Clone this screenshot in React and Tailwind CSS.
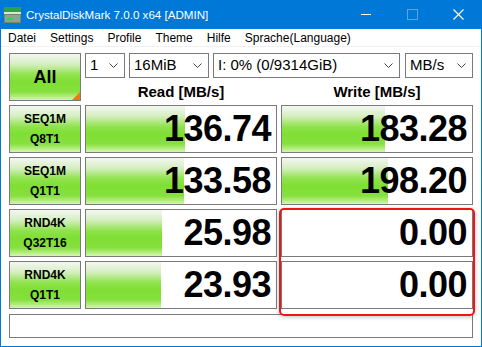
const rows = [
  { t1: 'SEQ1M', t2: 'Q8T1', read: '136.74', rw: 99, write: '183.28', ww: 103 },
  { t1: 'SEQ1M', t2: 'Q1T1', read: '133.58', rw: 98, write: '198.20', ww: 106 },
  { t1: 'RND4K', t2: 'Q32T16', read: '25.98', rw: 76, write: '0.00', ww: 0 },
  { t1: 'RND4K', t2: 'Q1T1', read: '23.93', rw: 75, write: '0.00', ww: 0 },
]

const menu = ['Datei', 'Settings', 'Profile', 'Theme', 'Hilfe', 'Sprache(Language)']

const green =
  'bg-[linear-gradient(to_bottom,#f3f6f1_0%,#d6efc2_22%,#8fe24c_45%,#7fdf34_60%,#86e03e_82%,#d4f6ae_100%)]'

function Chevron() {
  return (
    <svg width="9" height="6" viewBox="0 0 9 6" className="shrink-0">
      <path d="M0.5 0.5 L4.5 4.5 L8.5 0.5" fill="none" stroke="#444" strokeWidth="1" />
    </svg>
  )
}

function Combo({ label, w }) {
  return (
    <div className={`${w} h-[25px] flex items-center justify-between border border-[#7a7a7a] bg-white pl-[4px] pr-[6px] text-[15px] text-black`}>
      <span className="whitespace-nowrap">{label}</span>
      <Chevron />
    </div>
  )
}

function ValueBox({ value, width }) {
  return (
    <div className="relative h-[48px] border border-[#7a7a7a] bg-white overflow-hidden">
      {width > 0 && <div className={`absolute left-0 top-0 bottom-0 ${green}`} style={{ width }} />}
      <div className="relative h-full flex items-center justify-end pr-[5px] text-[36px] font-bold leading-none text-black tracking-[-0.5px]">
        {value}
      </div>
    </div>
  )
}

export default function App() {
  return (
    <div className="w-[482px] h-[347px] bg-[#0078d7] flex flex-col px-[1px] pb-[1px] font-['Liberation_Sans',sans-serif] select-none">
      {/* Title bar */}
      <div className="h-[29px] flex items-center text-white shrink-0">
        <svg width="17" height="16" viewBox="0 0 17 16" className="ml-[3px] mr-[5px]">
          <rect x="0" y="0" width="17" height="5" fill="#2aa24a" />
          <rect x="0" y="5" width="17" height="2" fill="#d8e8d8" />
          <rect x="0" y="7" width="17" height="9" fill="#6e8a6e" />
          <rect x="1" y="8" width="15" height="7" fill="#8fa38f" />
          <rect x="3" y="11" width="6" height="2" fill="#2fd24a" />
        </svg>
        <span className="text-[11.6px]">CrystalDiskMark 7.0.0 x64 [ADMIN]</span>
        <div className="ml-auto flex items-center h-full">
          <div className="w-[46px] h-full flex items-center justify-center">
            <div className="w-[10px] h-[1px] bg-white" />
          </div>
          <div className="w-[46px] h-full flex items-center justify-center">
            <div className="w-[11px] h-[11px] border border-[#5fa3e3]" />
          </div>
          <div className="w-[46px] h-full flex items-center justify-center">
            <svg width="11" height="11" viewBox="0 0 11 11">
              <path d="M0.5 0.5 L10.5 10.5 M10.5 0.5 L0.5 10.5" stroke="white" strokeWidth="1.1" />
            </svg>
          </div>
        </div>
      </div>

      <div className="flex-1 bg-white flex flex-col">
        {/* Menu bar */}
        <div className="h-[18px] flex items-center text-[12px] text-black border-b border-[#f0f0f0]">
          {menu.map((m) => (
            <span key={m} className="px-[7px]">{m}</span>
          ))}
        </div>

        {/* Main */}
        <div className="relative pl-[8px] pt-[6px]">
          <div className="grid grid-cols-[72px_192px_192px] gap-[4px]">
            <div className={`relative h-[48px] border border-[#7a7a7a] ${green} flex items-center justify-center text-[18px] font-bold`}>
              All
              <div className="absolute right-0 bottom-0 w-0 h-0 border-l-[8px] border-l-transparent border-b-[8px] border-b-[#f07a10]" />
            </div>
            <div className="col-span-2 flex flex-col">
              <div className="flex">
                <Combo label="1" w="w-[40px]" />
                <div className="w-[4px]" />
                <Combo label="16MiB" w="w-[80px]" />
                <div className="w-[4px]" />
                <Combo label="I: 0% (0/9314GiB)" w="w-[187px]" />
                <div className="w-[5px]" />
                <Combo label="MB/s" w="w-[68px]" />
              </div>
              <div className="flex h-[23px] items-center pt-[5px] text-[15px] font-bold text-black">
                <div className="w-[192px] text-center">Read [MB/s]</div>
                <div className="w-[4px]" />
                <div className="w-[192px] text-center">Write [MB/s]</div>
              </div>
            </div>

            {rows.map((r, i) => (
              <div key={i} className="contents">
                <div className={`h-[48px] border border-[#7a7a7a] ${green} flex flex-col items-center justify-center text-[12px] font-bold leading-[20px] text-black`}>
                  <span>{r.t1}</span>
                  <span>{r.t2}</span>
                </div>
                <ValueBox value={r.read} width={r.rw} />
                <ValueBox value={r.write} width={r.ww} />
              </div>
            ))}

            <div className="col-span-3 mt-[1px] h-[24px] border border-[#7a7a7a] bg-white" />
          </div>

          {/* highlight around zero results */}
          <div className="absolute left-[278px] top-[161px] w-[196px] h-[108px] rounded-[5px] border-2 border-[#f01414] shadow-[0_1px_4px_rgba(0,0,0,0.25)]" />
        </div>
      </div>
    </div>
  )
}
